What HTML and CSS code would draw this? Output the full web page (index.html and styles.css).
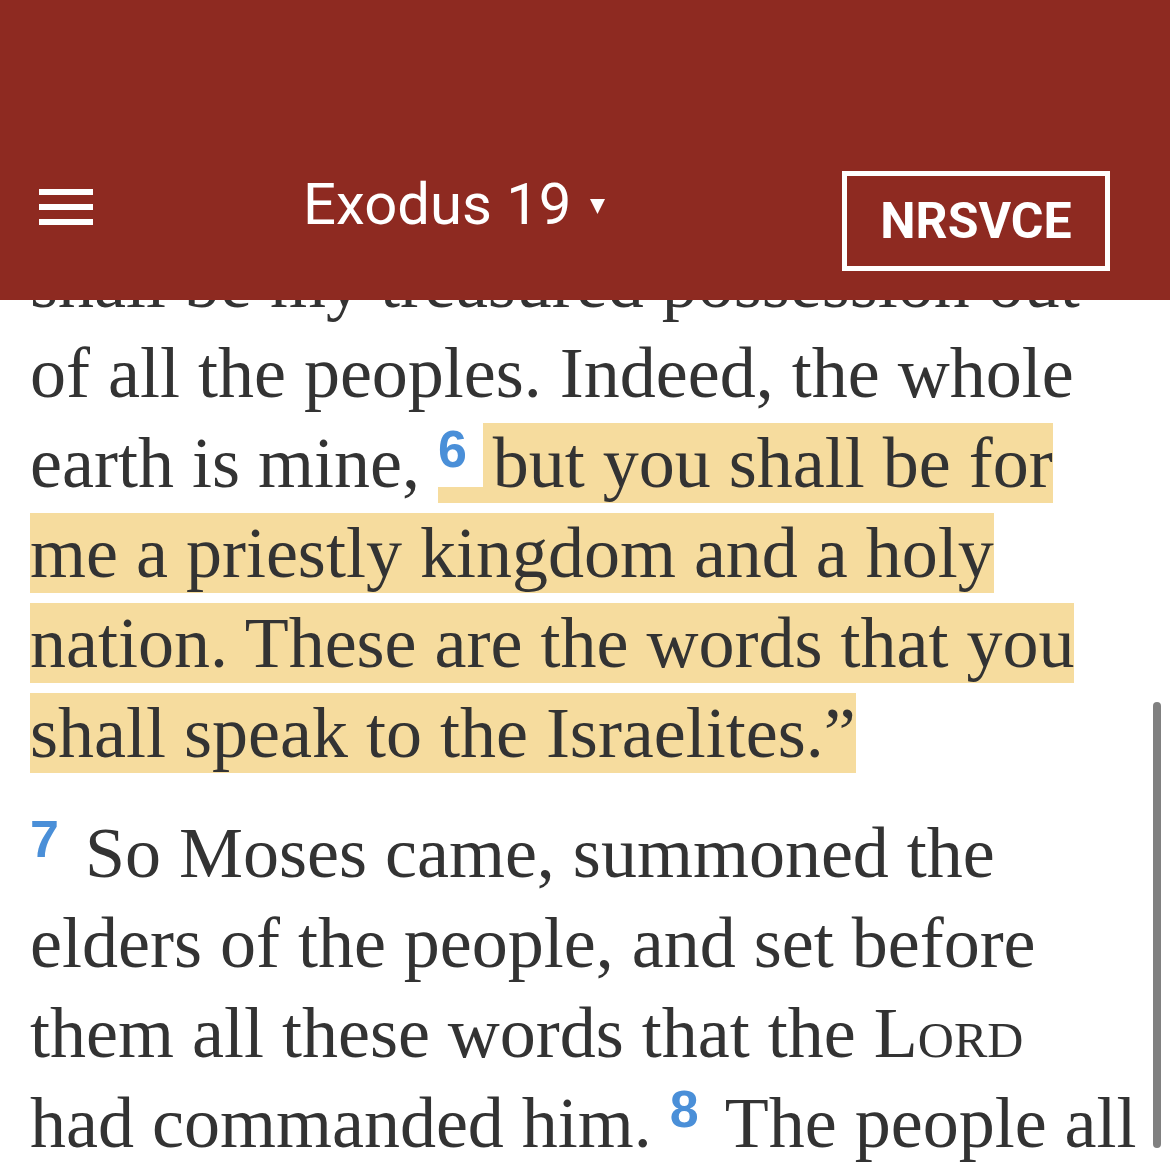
FILE: index.html
```html
<!DOCTYPE html>
<html lang="en">
<head>
<meta charset="utf-8">
<title>Exodus 19</title>
<link rel="stylesheet" href="styles.css">
</head>
<body>
<header class="topbar">
  <svg class="menu" width="54" height="36" viewBox="0 0 54 36" aria-hidden="true">
    <rect x="0" y="0" width="54" height="6" fill="#fff"/>
    <rect x="0" y="15" width="54" height="6" fill="#fff"/>
    <rect x="0" y="30" width="54" height="6" fill="#fff"/>
  </svg>
  <div class="title">Exodus 19<svg class="caret" width="15" height="15" viewBox="0 0 15 15" aria-hidden="true"><path d="M0 0 H15 L7.5 15 Z" fill="#fff"/></svg></div>
  <div class="version">NRSVCE</div>
</header>
<main class="reader">
  <p class="para">shall be my treasured possession out of all the peoples. Indeed, the whole earth is mine, <span class="hl"><span class="vnum">6</span>but you shall be for me a priestly kingdom and a holy nation. These are the words that you shall speak to the Israelites.”</span></p>
  <p class="para"><span class="vnum">7</span>So Moses came, summoned the elders of the people, and set before them all these words that the <span class="sc">Lord</span> had commanded him. <span class="vnum">8</span>The people all</p>
</main>
<div class="scrollbar"></div>
</body>
</html>
```

FILE: styles.css
```css
html, body {
  margin: 0;
  padding: 0;
  background: #fff;
}
body {
  width: 1170px;
  height: 1163px;
  overflow: hidden;
  position: relative;
}
.topbar {
  position: absolute;
  top: 0;
  left: 0;
  width: 1170px;
  height: 300px;
  background: #8e2a21;
  display: flex;
  align-items: flex-start;
  padding-left: 39px;
  box-sizing: border-box;
  z-index: 2;
}
.menu {
  margin-top: 189px;
  display: block;
}
.title {
  margin-top: 174px;
  margin-left: 210px;
  font-family: Roboto, "Liberation Sans", sans-serif;
  font-size: 58px;
  line-height: 60px;
  color: #fff;
  display: flex;
  align-items: flex-start;
}
.caret {
  margin-left: 19px;
  margin-top: 25px;
  display: block;
}
.version {
  margin-top: 171px;
  margin-left: auto;
  margin-right: 60px;
  width: 268px;
  height: 100px;
  box-sizing: border-box;
  border: 5px solid #fff;
  display: flex;
  align-items: center;
  justify-content: center;
  font-family: Roboto, "Liberation Sans", sans-serif;
  font-weight: 700;
  font-size: 50px;
  color: #fff;
}
.reader {
  padding: 238px 28px 0 30px;
  font-family: "Liberation Serif", "Times New Roman", serif;
  font-size: 72px;
  line-height: 90px;
  color: #333;
}
.para {
  margin: 0 0 30px 0;
}
.hl {
  background: #f6dc9e;
}
.vnum {
  font-family: "Liberation Sans", Arial, sans-serif;
  font-weight: 700;
  font-size: 52px;
  line-height: 0;
  color: #4a8fd8;
  background: #fff;
  vertical-align: 20px;
  padding: 0 16px 9px 0;
  margin-right: 10px;
}
.sc {
  font-variant: small-caps;
}
.scrollbar {
  position: absolute;
  left: 1153px;
  top: 702px;
  width: 8px;
  height: 446px;
  border-radius: 4px;
  background: #808080;
  z-index: 3;
}
```
